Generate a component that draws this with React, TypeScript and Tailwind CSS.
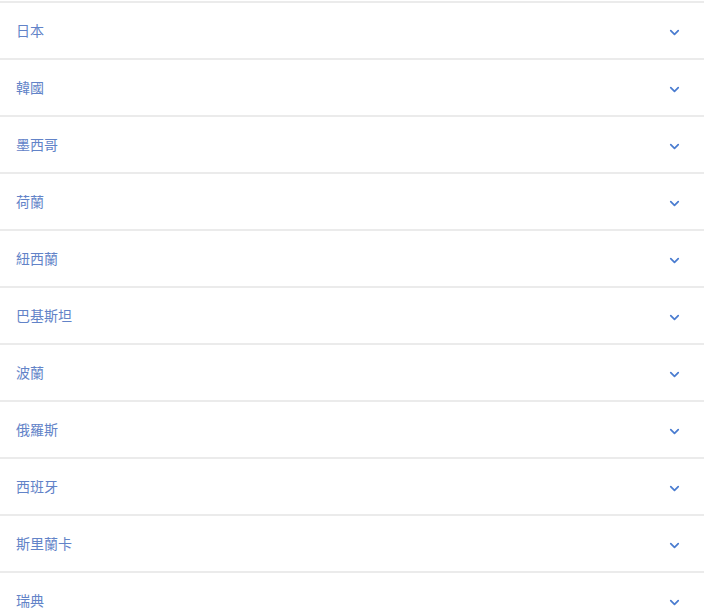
import { ChevronDown } from "lucide-react";

const countries = [
  "日本",
  "韓國",
  "墨西哥",
  "荷蘭",
  "紐西蘭",
  "巴基斯坦",
  "波蘭",
  "俄羅斯",
  "西班牙",
  "斯里蘭卡",
  "瑞典",
];

export default function App() {
  return (
    <div
      className="min-h-screen bg-white pt-px"
      style={{ fontFamily: '"Noto Sans CJK TC", "Noto Sans", sans-serif' }}
    >
      <div className="w-[704px]">
        {countries.map((c) => (
          <div
            key={c}
            className="h-[57px] border-t-2 border-[#ebebeb] flex items-center justify-between pl-4 pr-[22px]"
          >
            <span className="text-[14px] text-[#6283c8]">{c}</span>
            <ChevronDown className="w-[15px] h-[15px] mt-[3px] text-[#4a7cd0]" strokeWidth={2.75} />
          </div>
        ))}
      </div>
    </div>
  );
}
